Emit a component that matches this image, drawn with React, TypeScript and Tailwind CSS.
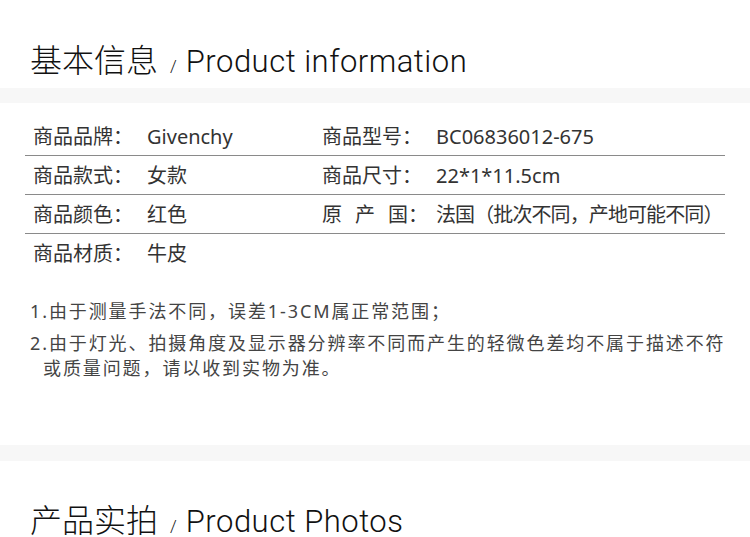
const CJK = "font-['Noto_Sans','Noto_Sans_CJK_SC',sans-serif]";

function SectionTitle({ cn, en }: { cn: string; en: string }) {
  return (
    <div className="flex items-baseline pl-[30px] text-[#111]">
      <span className={`${CJK} text-[32px] leading-none font-light`}>{cn}</span>
      <span className="font-['Roboto',sans-serif] text-[17px] font-light ml-[12px] mr-[9px]">/</span>
      <span className="font-['Roboto',sans-serif] text-[31px] leading-none font-light tracking-[0.5px]">{en}</span>
    </div>
  );
}

const rows: [string, string, string?, string?][] = [
  ["商品品牌：", "Givenchy", "商品型号：", "BC06836012-675"],
  ["商品款式：", "女款", "商品尺寸：", "22*1*11.5cm"],
  ["商品颜色：", "红色", "原产国：", "法国（批次不同，产地可能不同）"],
  ["商品材质：", "牛皮"],
];

function Cell({ label, value, wide }: { label?: string; value?: string; wide?: boolean }) {
  if (!label) return <div className="flex-1" />;
  const spaced = label === "原产国：";
  return (
    <div className={`flex items-center pl-2 ${wide ? "w-[289px] shrink-0" : "flex-1 min-w-0"}`}>
      <span className="w-[114px] shrink-0 whitespace-nowrap">
        {spaced ? (
          <>
            <span className="mr-[13px]">原</span>
            <span className="mr-[13px]">产</span>国：
          </>
        ) : (
          label
        )}
      </span>
      <span className={`whitespace-nowrap ${spaced ? "tracking-[-0.9px]" : ""}`}>{value}</span>
    </div>
  );
}

export default function App() {
  return (
    <div className={`w-[750px] h-[537px] bg-white overflow-hidden ${CJK}`}>
      <div className="pt-[44px] h-[88px]">
        <SectionTitle cn="基本信息" en="Product information" />
      </div>
      <div className="h-[15px] bg-[#f7f7f7]" />

      <div className="mx-[25px] mt-[14px] text-[20px] text-[#333]">
        {rows.map((r, i) => (
          <div
            key={i}
            className={`flex h-[39px] pt-px ${i < rows.length - 1 ? "border-b border-[#8a8a8a]" : ""}`}
          >
            <Cell label={r[0]} value={r[1]} wide />
            <Cell label={r[2]} value={r[3]} />
          </div>
        ))}
      </div>

      <div className="mt-[26px] pl-[30px] pr-[18px] text-[18px] leading-[25px] text-[#444] tracking-[1.9px]">
        <p>1.由于测量手法不同，误差1-3CM属正常范围；</p>
        <p className="mt-[7px] pl-[13px] -indent-[13px]">
          2.由于灯光、拍摄角度及显示器分辨率不同而产生的轻微色差均不属于描述不符或质量问题，请以收到实物为准。
        </p>
      </div>

      <div className="mt-[64px] h-[16px] bg-[#f7f7f7]" />
      <div className="pt-[43px]">
        <SectionTitle cn="产品实拍" en="Product Photos" />
      </div>
    </div>
  );
}
